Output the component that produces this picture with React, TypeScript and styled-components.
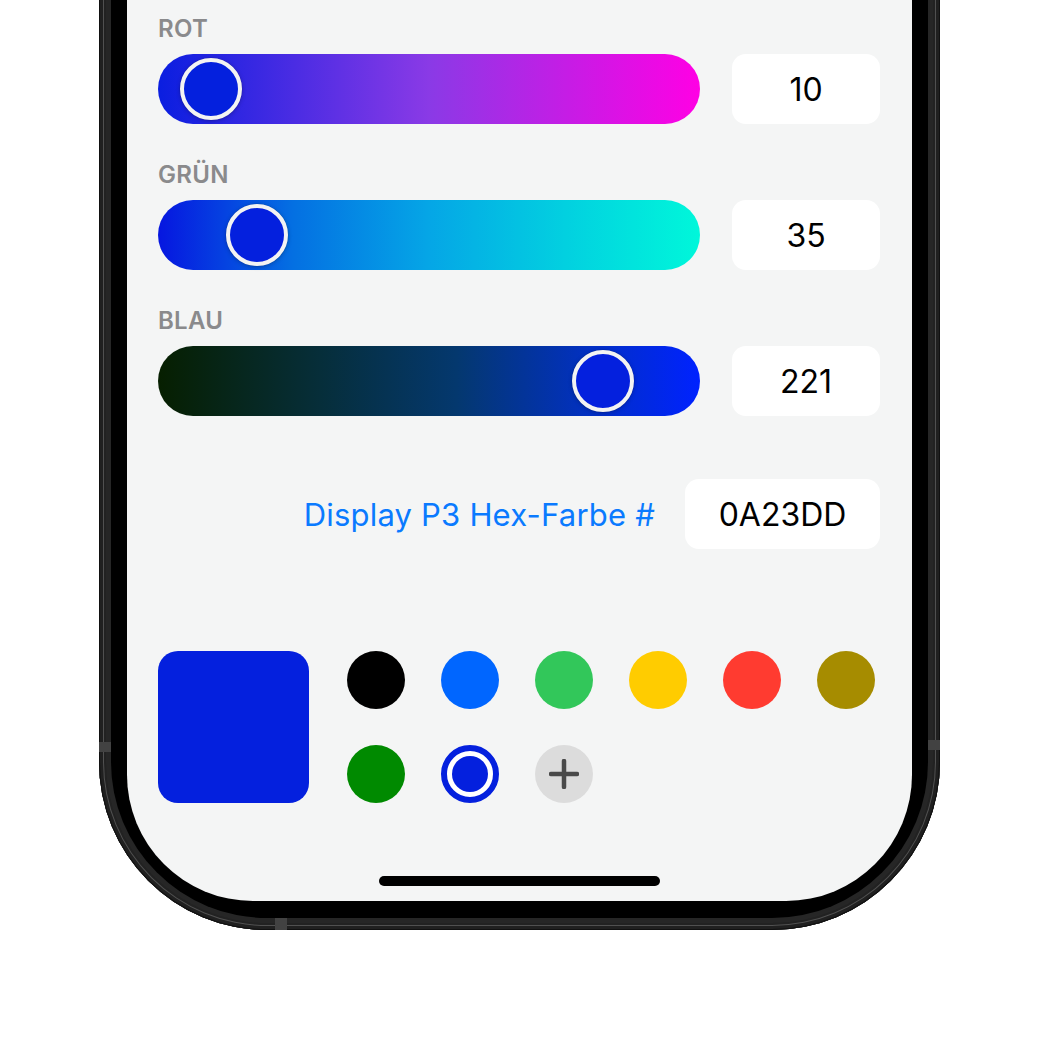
import React from "react";
import styled, { createGlobalStyle } from "styled-components";

const Global = createGlobalStyle`
  html, body { margin: 0; padding: 0; background: #ffffff; }
  body { font-family: Inter, "Noto Sans", "Liberation Sans", sans-serif; }
  #root { height: 1040px; overflow: hidden; }
`;

const Page = styled.div`
  width: 1040px;
  height: 1040px;
  overflow: hidden;
  background: #ffffff;
`;

const Phone = styled.div`
  position: relative;
  box-sizing: border-box;
  width: 841px;
  margin: -100px 0 0 99px;
  padding: 12px;
  border-radius: 60px 60px 168px 168px;
  background: #262626;
  box-shadow: inset 0 0 0 1px #111111, inset 0 0 0 4px #202020,
    inset 0 0 0 5px #505050, inset 0 0 0 7px #222222;
`;

const Band = styled.div<{ $side: "left" | "right" | "bottom" }>`
  position: absolute;
  background: #424242;
  ${(p) =>
    p.$side === "left"
      ? "left: 0; top: 842px; width: 12px; height: 10px;"
      : p.$side === "right"
      ? "right: 0; top: 840px; width: 12px; height: 10px;"
      : "left: 176px; bottom: 0; width: 12px; height: 12px;"}
`;

const Bezel = styled.div`
  box-sizing: border-box;
  padding: 16px 16px 17px 16px;
  border-radius: 48px 48px 156px 156px;
  background: #000;
`;

const Screen = styled.div`
  box-sizing: border-box;
  height: 973px;
  padding: 88px 32px 15px 31px;
  border-radius: 32px 32px 126px 126px;
  background: #f4f5f5;
  display: flex;
  flex-direction: column;
`;

const SliderRow = styled.div`
  display: flex;
  flex-direction: column;
  gap: 12px;
  margin-bottom: 38px;
`;

const Label = styled.div`
  font-size: 24px;
  line-height: 26px;
  font-weight: 600;
  letter-spacing: 0.3px;
  color: #8a8a8c;
`;

const Controls = styled.div`
  display: grid;
  grid-template-columns: 1fr 148px;
  column-gap: 32px;
`;

const Track = styled.div<{ $bg: string }>`
  position: relative;
  height: 70px;
  border-radius: 35px;
  background: ${(p) => p.$bg};
`;

const Thumb = styled.div`
  position: absolute;
  top: 4px;
  box-sizing: border-box;
  width: 62px;
  height: 62px;
  margin-left: -31px;
  border-radius: 50%;
  border: 4px solid #f3f3f3;
  background: #0420de;
  box-shadow: 0 0 0 0.5px rgba(0, 0, 0, 0.12), 0 1px 4px rgba(0, 0, 0, 0.25);
`;

const ValueBox = styled.div<{ $w?: number }>`
  box-sizing: border-box;
  height: 70px;
  width: ${(p) => (p.$w ? `${p.$w}px` : "auto")};
  border-radius: 14px;
  background: #ffffff;
  display: flex;
  align-items: center;
  justify-content: center;
  font-size: 32px;
  font-weight: 400;
  color: #000;
`;

const HexRow = styled.div`
  display: flex;
  justify-content: flex-end;
  align-items: center;
  gap: 30px;
  margin-top: 25px;
`;

const HexLabel = styled.div`
  font-size: 31px;
  font-weight: 400;
  letter-spacing: 0.2px;
  color: #0a7aff;
`;

const SwatchArea = styled.div`
  display: flex;
  align-items: flex-start;
  gap: 38px;
  margin-top: 102px;
`;

const Preview = styled.div`
  width: 151px;
  height: 152px;
  border-radius: 20px;
  background: #0420de;
`;

const Palette = styled.div`
  display: grid;
  grid-template-columns: repeat(6, 58px);
  grid-auto-rows: 58px;
  column-gap: 36px;
  row-gap: 36px;
`;

const Dot = styled.div<{ $c: string }>`
  width: 58px;
  height: 58px;
  border-radius: 50%;
  background: ${(p) => p.$c};
`;

const SelectedDot = styled.div`
  box-sizing: border-box;
  width: 58px;
  height: 58px;
  border-radius: 50%;
  border: 6px solid #0420de;
  background: #fff;
  display: flex;
  align-items: center;
  justify-content: center;
`;

const InnerDot = styled.div`
  width: 36px;
  height: 36px;
  border-radius: 50%;
  background: #0420de;
`;

const AddDot = styled.div`
  width: 58px;
  height: 58px;
  border-radius: 50%;
  background: #dcdcdc;
  display: flex;
  align-items: center;
  justify-content: center;
`;

const HomeIndicator = styled.div`
  margin: auto auto 0 auto;
  width: 281px;
  height: 10px;
  border-radius: 5px;
  background: #000;
`;

const sliders = [
  {
    label: "ROT",
    value: 10,
    bg: "linear-gradient(90deg, #0a1ee0 0%, #8a3ae6 50%, #ff00e4 100%)",
  },
  {
    label: "GRÜN",
    value: 35,
    bg: "linear-gradient(90deg, #0616e0 0%, #0470e2 25%, #05a6e6 50%, #02d0e0 75%, #00f7da 100%)",
  },
  {
    label: "BLAU",
    value: 221,
    bg: "linear-gradient(90deg, #061f00 0%, #062e3a 30%, #04386e 55%, #0230c4 80%, #0022ff 100%)",
  },
];

const palette = ["#000000", "#0066ff", "#32c75a", "#ffcc00", "#ff3b30", "#a68c00", "#008a00"];

export default function App() {
  return (
    <Page>
      <Global />
      <Phone>
        <Band $side="left" />
        <Band $side="right" />
        <Band $side="bottom" />
        <Bezel>
          <Screen>
            {sliders.map((s) => (
              <SliderRow key={s.label}>
                <Label>{s.label}</Label>
                <Controls>
                  <Track $bg={s.bg}>
                    <Thumb
                      style={{ left: `calc(34px + (100% - 68px) * ${s.value / 255})` }}
                    />
                  </Track>
                  <ValueBox>{s.value}</ValueBox>
                </Controls>
              </SliderRow>
            ))}
            <HexRow>
              <HexLabel>Display P3 Hex-Farbe #</HexLabel>
              <ValueBox $w={195}>0A23DD</ValueBox>
            </HexRow>
            <SwatchArea>
              <Preview />
              <Palette>
                {palette.map((c) => (
                  <Dot key={c} $c={c} />
                ))}
                <SelectedDot>
                  <InnerDot />
                </SelectedDot>
                <AddDot>
                  <svg width="30" height="30" viewBox="0 0 30 30">
                    <path
                      d="M15 2v26M2 15h26"
                      stroke="#4a4a4a"
                      strokeWidth="4.5"
                      strokeLinecap="round"
                    />
                  </svg>
                </AddDot>
              </Palette>
            </SwatchArea>
            <HomeIndicator />
          </Screen>
        </Bezel>
      </Phone>
    </Page>
  );
}
